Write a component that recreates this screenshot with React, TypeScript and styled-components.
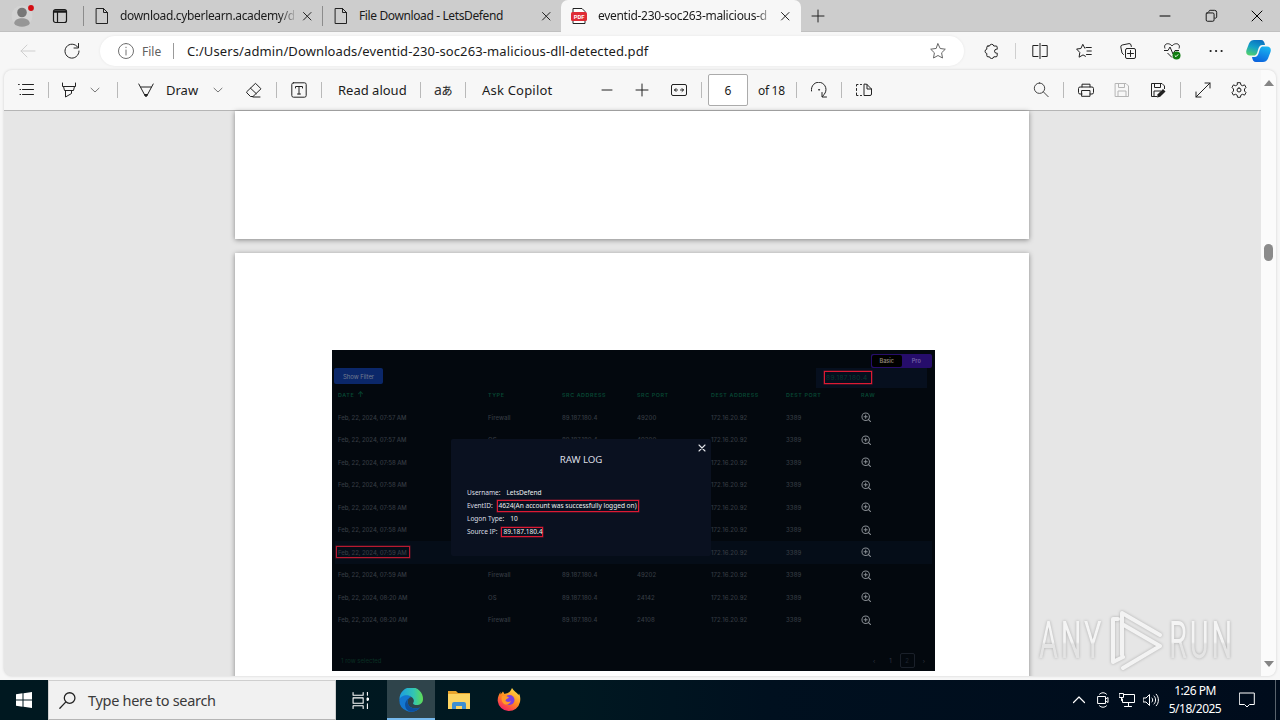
import React, { memo } from "react";
import styled, { createGlobalStyle, css } from "styled-components";

const GlobalStyle = createGlobalStyle`
  * {
    box-sizing: border-box;
  }

  body {
    margin: 0;
    overflow: hidden;
    font-family: "Noto Sans", "Open Sans", "Noto Sans CJK JP", sans-serif;
    color: #1b1b1b;
  }

  svg {
    display: block;
    flex: none;
  }
`;

const Screen = styled.div`
  position: relative;
  width: 1280px;
  height: 720px;
  display: flex;
  flex-direction: column;
  overflow: hidden;
  background-color: #f7f7f7;
`;

/* Shared bits */

const Cell = styled.div<{ $w: number }>`
  width: ${({ $w }) => $w}px;
  flex: none;
  display: flex;
  align-items: center;
  justify-content: center;
`;

const Gap = styled.div<{ $w?: number }>`
  ${({ $w }) =>
    $w === undefined
      ? css`
          flex: 1;
        `
      : css`
          flex: none;
          width: ${$w}px;
        `}
`;

const Divider = styled.div<{ $h?: number; $tone?: string }>`
  width: 1px;
  flex: none;
  height: ${({ $h }) => $h ?? 16}px;
  background-color: ${({ $tone }) => $tone ?? "#b9b9b9"};
`;

const Label = styled.div<{
  $w: number;
  $track?: number;
  $size?: number;
  $tone?: string;
}>`
  width: ${({ $w }) => $w}px;
  flex: none;
  font-size: ${({ $size }) => $size ?? 13}px;
  letter-spacing: ${({ $track }) => $track ?? 0}px;
  color: ${({ $tone }) => $tone ?? "#1b1b1b"};
  white-space: nowrap;
`;

/* Tab strip */

const TabStrip = styled.div`
  height: 32px;
  display: flex;
  align-items: center;
  background-color: #cdcdcd;
  border-bottom: 1px solid #c0c0c0;
`;

const Tab = styled.div<{ $active?: boolean; $w: number; $pad: number }>`
  width: ${({ $w }) => $w}px;
  height: 32px;
  flex: none;
  display: flex;
  align-items: center;
  padding-left: ${({ $pad }) => $pad}px;
  ${({ $active }) =>
    $active &&
    css`
      background-color: #f7f7f7;
      border-radius: 7px 7px 0 0;
      margin-bottom: -1px;
    `}
`;

const TabTitle = styled.div<{ $w: number; $track: number; $fade?: boolean }>`
  width: ${({ $w }) => $w}px;
  flex: none;
  white-space: nowrap;
  font-size: 12px;
  line-height: 18px;
  letter-spacing: ${({ $track }) => $track}px;
  ${({ $fade }) =>
    $fade &&
    css`
      mask-image: linear-gradient(to right, #000 calc(100% - 14px), rgba(0, 0, 0, 0.2));
    `}
`;

/* Address row */

const NavRow = styled.div`
  height: 38px;
  display: flex;
  align-items: center;
`;

const AddressBar = styled.div`
  width: 864px;
  height: 30px;
  flex: none;
  display: flex;
  align-items: center;
  background-color: #fff;
  border-radius: 15px;
  box-shadow: 0 0 3px rgba(0, 0, 0, 0.07);
`;

/* Viewer */

const Viewer = styled.div`
  width: 1272px;
  height: 606px;
  margin-left: 4px;
  flex: none;
  display: flex;
  overflow: hidden;
  border-radius: 8px;
  background-color: #e6e6e6;
  box-shadow: 0 0 3px rgba(0, 0, 0, 0.16);
`;

const ViewerMain = styled.div`
  width: 1257px;
  display: flex;
  flex-direction: column;
`;

const PdfToolbar = styled.div`
  height: 41px;
  flex: none;
  display: flex;
  align-items: center;
  background-color: #f7f7f7;
  border-bottom: 1px solid #b5b5b5;
`;

const PageInput = styled.div`
  width: 40px;
  height: 32px;
  flex: none;
  display: flex;
  align-items: center;
  justify-content: center;
  background-color: #fff;
  border: 1px solid #ababab;
  border-radius: 2px;
  font-size: 12px;
`;

const PageArea = styled.div`
  flex: 1;
  min-height: 0;
  display: flex;
  flex-direction: column;
  align-items: center;
  gap: 14px;
  padding-right: 1px;
`;

const PdfPage = styled.div<{ $h: number }>`
  width: 794px;
  height: ${({ $h }) => $h}px;
  flex: none;
  padding-left: 97px;
  background-color: #fff;
  box-shadow: 0 1px 5px rgba(0, 0, 0, 0.42);
`;

const ScrollTrack = styled.div`
  width: 15px;
  display: flex;
  flex-direction: column;
  align-items: center;
  justify-content: space-between;
  padding: 10px 0 9px;
  background-color: #fbfbfb;
`;

const ScrollThumb = styled.div`
  width: 9px;
  height: 17px;
  margin-bottom: 243px;
  border-radius: 5px;
  background-color: #8b8b8b;
`;

/* Figure inside the page */

const Figure = styled.div`
  position: relative;
  width: 603px;
  height: 321px;
  margin-top: 97px;
  display: flex;
  flex-direction: column;
  background-color: #03080e;
  font-family: "Inter", "Roboto", sans-serif;
  font-size: 6px;
`;

const FigureTop = styled.div`
  height: 18px;
  display: flex;
  justify-content: flex-end;
  align-items: center;
  padding: 3px 3px 0 0;
`;

const ModeSwitch = styled.div`
  width: 61px;
  height: 14px;
  display: flex;
  padding: 1px;
  border-radius: 2px;
  background-color: #260d6b;
`;

const ModeOption = styled.div<{ $on?: boolean }>`
  flex: 1;
  display: flex;
  align-items: center;
  justify-content: center;
  border-radius: 2px;
  background-color: ${({ $on }) => ($on ? "#000" : "transparent")};
  color: ${({ $on }) => ($on ? "#8f8577" : "#7361a5")};
  font-size: 5.5px;
  font-weight: 600;
`;

const FilterRow = styled.div`
  height: 20px;
  display: flex;
  justify-content: space-between;
  padding: 0 8px 0 2px;
`;

const FilterButton = styled.div`
  width: 49px;
  height: 16px;
  display: flex;
  align-items: center;
  justify-content: center;
  border-radius: 2px;
  background-color: #0b2769;
  color: #747b90;
  letter-spacing: -0.05px;
`;

const SearchBox = styled.div`
  width: 111px;
  height: 20px;
  padding: 3px 8px;
  background-color: #060f1e;
`;

const Marked = styled.div<{ $w: number; $h: number }>`
  width: ${({ $w }) => $w}px;
  height: ${({ $h }) => $h}px;
  flex: none;
  display: flex;
  align-items: center;
  padding-left: 1px;
  border: 1px solid #dc1a33;
  box-shadow: 0 0 0 0.5px rgba(220, 26, 51, 0.5);
  white-space: nowrap;
`;

const SearchValue = styled.span`
  color: #0a3a32;
  font-size: 6.5px;
  letter-spacing: 0.4px;
`;

const LogRow = styled.div<{ $head?: boolean; $selected?: boolean }>`
  height: ${({ $head }) => ($head ? 13 : 22.5)}px;
  margin: 0 3px;
  margin-bottom: ${({ $head }) => ($head ? 5.2 : 0)}px;
  padding-left: 3px;
  display: grid;
  grid-template-columns: 150px 74px 75px 74px 75px 75px 1fr;
  align-items: center;
  white-space: nowrap;
  letter-spacing: ${({ $head }) => ($head ? 0.57 : 0.07)}px;
  font-weight: ${({ $head }) => ($head ? 600 : 500)};
  font-size: ${({ $head }) => ($head ? 5.4 : 6)}px;
  color: ${({ $head }) => ($head ? "#074733" : "#353b42")};
  background-color: ${({ $selected }) => ($selected ? "#050d18" : "transparent")};
`;

const LogDate = styled.span`
  letter-spacing: -0.08px;
`;

const SortArrow = styled.span`
  margin-left: 1px;
  font-size: 7px;
`;

const DateMark = styled.div`
  width: 74px;
  height: 12px;
  margin-left: -2px;
  display: flex;
  align-items: center;
  padding-left: 1px;
  border: 1px solid #b81a30;
  box-shadow: 0 0 0 0.5px rgba(184, 26, 48, 0.5);
`;

const LogFooter = styled.div`
  margin-top: 21.3px;
  height: 16px;
  display: flex;
  align-items: center;
  justify-content: space-between;
  padding: 0 10px 0 9px;
  color: #0a3024;
`;

const Pager = styled.div`
  display: flex;
  align-items: center;
  gap: 8px;
  color: #303642;
`;

const PagerPrevious = styled.span`
  margin-right: 6px;
`;

const PagerCurrent = styled.div`
  width: 15px;
  height: 15px;
  display: flex;
  align-items: center;
  justify-content: center;
  border: 1px solid #1a202a;
  border-radius: 2px;
  color: #1f2531;
`;

const Modal = styled.div`
  position: absolute;
  left: 119px;
  top: 89px;
  width: 260px;
  height: 117px;
  padding: 0 16px;
  border-radius: 2px;
  background-color: #0a1120;
  font-family: "Noto Sans", "Open Sans", sans-serif;
  color: #dcdfe4;
`;

const ModalClose = styled.div`
  position: absolute;
  right: 5px;
  top: 5px;
`;

const ModalTitle = styled.div`
  height: 41px;
  margin-bottom: 6px;
  display: flex;
  align-items: center;
  justify-content: center;
  font-size: 9.7px;
  letter-spacing: -0.05px;
`;

const Field = styled.div<{ $gap: number }>`
  height: 13px;
  display: flex;
  align-items: center;
  gap: ${({ $gap }) => $gap}px;
  font-size: 6.6px;
  letter-spacing: -0.05px;
  white-space: nowrap;
  color: #dcdfe4;
`;

const FieldValue = styled.span`
  color: #eceef1;
  letter-spacing: -0.02px;
`;

/* Watermark */

const Watermark = styled.div`
  position: absolute;
  left: 1039px;
  top: 608px;
  width: 200px;
  height: 66px;
  display: flex;
  align-items: center;
  filter: drop-shadow(0 0 1.5px rgba(0, 0, 0, 0.25));
`;

const WatermarkWord = styled.div<{ $w: number }>`
  width: ${({ $w }) => $w}px;
  flex: none;
  white-space: nowrap;

  span {
    display: inline-block;
    transform: scaleX(0.57);
    transform-origin: left center;
    font-family: "Roboto", sans-serif;
    font-size: 51px;
    line-height: 50px;
    letter-spacing: 5px;
    color: transparent;
    background: linear-gradient(#f4f4f4 52%, #e4e4e4 56%);
    background-clip: text;
  }
`;

/* Taskbar */

const Taskbar = styled.div`
  height: 40px;
  margin-top: 4px;
  flex: none;
  display: flex;
  align-items: center;
  background: linear-gradient(to right, #001820 0, #001821 45%, #00101f 60%, #000c1c 100%);
  color: #fff;
`;

const TaskSearch = styled.div`
  width: 288px;
  height: 40px;
  flex: none;
  display: flex;
  align-items: center;
  padding-left: 10px;
  gap: 12px;
  background-color: #f1f1f1;
  border: 1px solid #cfcfcf;
  border-bottom-color: #b5b5b5;
  font-size: 14.5px;
  letter-spacing: -0.3px;
  color: #3a3a3a;
`;

const TaskApp = styled.div<{ $active?: boolean }>`
  width: 48px;
  height: 40px;
  flex: none;
  display: flex;
  align-items: center;
  justify-content: center;
  ${({ $active }) =>
    $active &&
    css`
      background-color: #2f444b;
      border-bottom: 2px solid #76b9ed;
      padding-top: 2px;
    `}
`;

const Clock = styled.div`
  width: 60px;
  flex: none;
  text-align: center;
  font-size: 12px;
  line-height: 18px;
  letter-spacing: -0.5px;
  white-space: nowrap;
`;

const DesktopEdge = styled.div`
  width: 5px;
  height: 40px;
  border-left: 1px solid #59636d;
`;

interface GlyphProps {
  d: string;
  size?: number;
  color?: string;
  stroke?: number;
}

// All glyphs share a 16 unit grid
const Glyph: React.FC<GlyphProps> = memo(
  ({ d, size = 16, color = "#222", stroke = 1 }) => (
    <svg
      width={size}
      height={size}
      viewBox="0 0 16 16"
      fill="none"
      stroke={color}
      strokeWidth={stroke}
      strokeLinecap="round"
      strokeLinejoin="round"
    >
      <path d={d} />
    </svg>
  )
);

const glyphs = {
  close: "M4.5 4.5l7.5 7.5M12 4.5L4.5 12",
  file: "M2.5 .5h7l4 4v11h-11zM9.5 .5v4h4",
  plus: "M8 2v12M2 8h12",
  minus: "M3 8h10",
  back: "M15 8H1M7 2L1 8l6 6",
  refresh: "M13.8 4.2A7 7 0 1 0 15 8M14.5 .5v4.5H10",
  info: "M8 .5a7.5 7.5 0 1 0 0 15 7.5 7.5 0 0 0 0-15zM8 7v5M8 4.2v.5",
  star: "M8 .8l2.2 4.7 5.1.7-3.7 3.6.9 5.2L8 12.5 3.5 15l.9-5.2L.7 6.2l5.1-.7z",
  // piece with two outward knobs (top, left) and a notch on the right
  puzzle:
    "M5 3h1.500a2.200 2.200 0 0 1 4.300 0H13a1.200 1.200 0 0 1 1.200 1.200V6.300h-.8a1.900 1.900 0 0 0 0 3.800h.8v2.500A1.200 1.200 0 0 1 13 13.800h-2.200a2.200 2.200 0 0 1-4.300 0H5A1.200 1.200 0 0 1 3.800 12.600V10.500a2.200 2.200 0 0 1 0-4.300V4.200A1.200 1.200 0 0 1 5 3z",
  split: "M6 2.5H.8v11H6M10 2.5h5.2v11H10M8 0v16",
  favorites:
    "M15.3 4.5H10M15.3 8H11M15.3 11.5H10.5M8.8 5.2L6.8 1.3 4.9 5.5.6 6l3.2 3.5-.7 4.7 3.9-2.3 2.5 1.4",
  collections:
    "M7 5.5h7A1.5 1.5 0 0 1 15.5 7v7a1.5 1.5 0 0 1-1.5 1.5H7A1.5 1.5 0 0 1 5.5 14V7A1.5 1.5 0 0 1 7 5.5zM10.5 7.5v6M7.5 10.5h6M3.5 11.5L2 10 .8 4a1.8 1.8 0 0 1 1.4-2L9 .6a1.8 1.8 0 0 1 2 1.4l.3 1.5",
  list: "M4.5 2.5h11M4.500 7.500h11M4.5 12.5h11M.5 2.5h.8M2 7.5h.6M2 12.5h.6",
  chevron: "M4 6.2l4 3.8 4-3.8",
  marker: "M1.5 1v3.5h13V1M2.5 4.5l1 4h9l1-4M4.5 8.5v6.5l6-3.5v-3",
  pen: "M.8 2l6.7 12.5h1L15.2 2M2.7 5h10.6M6.5 12.5h3M7 13.5h2",
  eraser: "M1 9.5L9.5 1.3 15 6.8 7 14.5H4.5L1 11zM4.5 6.2l5.8 5.5M7 15h7",
  textBox:
    "M2.5.8h11a1.7 1.7 0 0 1 1.7 1.7v11a1.7 1.7 0 0 1-1.7 1.7h-11A1.7 1.7 0 0 1 .8 13.5v-11A1.7 1.7 0 0 1 2.5.8zM4.5 6V4.5h7V6M8 4.5v7.5M6.5 12h3",
  fit: "M2 2.5h12a1.5 1.5 0 0 1 1.5 1.5v8a1.5 1.5 0 0 1-1.5 1.5H2A1.5 1.5 0 0 1 .5 12V4A1.5 1.5 0 0 1 2 2.5zM3.5 8h3M9.5 8h3M5 6.5L3.5 8 5 9.5M11 6.5L12.5 8 11 9.5",
  rotate: "M.5 9A7.300 7.300 0 1 1 13 12.500L11.500 14.500M11 10.500V15h4.500M8 7.5h.6v.6H8z",
  pageView:
    "M8 2.5v11h6a1.5 1.5 0 0 0 1.5-1.5V7L11 2.5zM11 2.5V7h4.5M5.5 2.5h-1M2 2.5H.5V4M.5 6.5v2M.5 11v2.5H2M4.5 13.5h1",
  search: "M6.5 1a5.2 5.2 0 1 0 0 10.4A5.2 5.2 0 0 0 6.5 1zM10.5 10l4.700 4.7",
  print:
    "M4 5V2.2h8V5M4 12H2a1.5 1.5 0 0 1-1.5-1.5V6.5A1.5 1.5 0 0 1 2 5h12a1.5 1.5 0 0 1 1.5 1.5v4A1.5 1.5 0 0 1 14 12h-2M4 8.5h8v5.8H4z",
  save: "M1.5 1.5h10.5l2.5 2.5v10.5h-13zM4.5 1.5v4h6v-4M4 14.5V9h8v5.5",
  expand: "M10 1h5v5M6 15H1v-5M15 1L1 15",
  restore:
    "M5.5 3.5A1.5 1.5 0 0 1 7 1.5h5a2.5 2.5 0 0 1 2.5 2.5v5a1.5 1.5 0 0 1-2 1.5M3.5 4.5h6.5A1.5 1.5 0 0 1 11.5 6v6.5a1.5 1.5 0 0 1-1.5 1.5H4A1.5 1.5 0 0 1 2.5 12.5V5.5A1 1 0 0 1 3.5 4.5z",
  zoomIn: "M7.5 1.5a6 6 0 1 0 0 12 6 6 0 0 0 0-12zM11.8 11.8l3.5 3.5M7.5 5v5M5 7.5h5",
  gear: "M6.6.7h2.8l.5 2.2 1.5.8 2.2-.8 1.4 2.5L13.5 7v2l1.5 1.6-1.4 2.5-2.2-.8-1.5.8-.5 2.200H6.6l-.5-2.2-1.5-.8-2.2.8L1 10.6 2.5 9V7L1 5.4l1.4-2.5 2.2.8 1.5-.8zM8 6a2 2 0 1 0 0 4 2 2 0 0 0 0-4z",
};

const PdfIcon = () => (
  <svg width="16" height="16" viewBox="0 0 16 16">
    <path d="M2 .5h9L14 3.5v12H2z" fill="#fff" stroke="#222" />
    <rect x="0" y="4" width="16" height="9" rx="1.5" fill="#df2c35" />
    <text x="8" y="10.7" fontSize="5.8" fontWeight="700" fill="#fff" textAnchor="middle" fontFamily="Roboto, sans-serif">
      PDF
    </text>
  </svg>
);

const Avatar = () => (
  <svg width="23" height="22" viewBox="0 0 23 22">
    <circle cx="11" cy="11" r="10.5" fill="#d3d3d3" />
    <circle cx="11" cy="7.5" r="4.8" fill="#777" />
    <path d="M3.2 18.5c0-7 15.6-7 15.6 0-2 4.2-13.6 4.2-15.6 0z" fill="#969696" />
    <circle cx="20" cy="3" r="2.9" fill="#d40c12" />
  </svg>
);

const PanelIcon = () => (
  <svg width="16" height="16" viewBox="0 0 16 16" fill="none" stroke="#1a1a1a">
    <rect x="1.5" y="1.5" width="13" height="13" rx="2" strokeWidth="1.2" />
    <path d="M2 3.5h12" strokeWidth="2.5" />
    <path d="M5.5 4v10" strokeWidth="1.2" />
  </svg>
);

const HealthIcon = () => (
  <svg width="18" height="18" viewBox="0 0 18 18" fill="none" stroke="#222" strokeLinejoin="round">
    <path d="M2 6.5C0 1.5 6 0 9 4c3-4 9-2.5 7 2.5M1 8.5h4L7 5l3 7 2-3.5h4M4.5 11L9 15.5" />
    <circle cx="13.5" cy="13.5" r="4" fill="#107c10" stroke="none" />
    <path d="M11.8 13.5l1.2 1.2 2.2-2.3" stroke="#fff" />
  </svg>
);

const CopilotIcon = () => (
  <svg width="25" height="24" viewBox="0 0 25 24">
    <defs>
      <linearGradient id="copilotLeft" x1="0.7" y1="0" x2="0.3" y2="1">
        <stop offset="0" stopColor="#0a6fc0" />
        <stop offset="0.5" stopColor="#13a0c8" />
        <stop offset="1" stopColor="#4fcf70" />
      </linearGradient>
      <linearGradient id="copilotRight" x1="0.7" y1="0" x2="0.3" y2="1">
        <stop offset="0" stopColor="#18b4f0" />
        <stop offset="1" stopColor="#0b62dd" />
      </linearGradient>
    </defs>
    <path d="M8 1h7c2.500 0 3.500 2 4 5h-2.500c-2.500 0-3.500 1.500-4.500 5-.8 3-1.500 5.500-4 5.500H4c-3 0-4.500-2-3.500-5.500L3 4.500C4 2 6 1 8 1z" fill="url(#copilotLeft)" />
    <path d="M17 23h-7C7.500 23 6.500 21 6 18h2.500c2.500 0 3.500-1.500 4.500-5 .8-3 1.500-5.500 4-5.500H21c3 0 4.500 2 3.500 5.500L22 19.500c-1 2.500-3 3.500-5 3.500z" fill="url(#copilotRight)" />
  </svg>
);

const SaveAsIcon = () => (
  <svg width="16" height="16" viewBox="0 0 16 16" fill="none" stroke="#222">
    <path d="M7 14.5H1.5v-13H12L14.5 4v3M4.5 1.5v4h6v-4M4 14V9h7" />
    <path d="M7 15.5l.7-3.3L13 7l2.5 2.5-5.3 5.3z" fill="#222" stroke="none" />
  </svg>
);

const TranslateIcon = styled.div`
  margin-top: -2px;
  font-size: 14px;
  letter-spacing: -0.5px;
  color: #333;

  small {
    font-size: 11px;
    font-weight: 500;
  }
`;

const ArrowMark: React.FC<{ down?: boolean }> = ({ down }) => (
  <svg width="10" height="6" viewBox="0 0 10 6">
    <path d={down ? "M0 0h10L5 6z" : "M0 6h10L5 0z"} fill="#858585" />
  </svg>
);

const TabBar = () => (
  <TabStrip>
    <Gap $w={11} />
    <Avatar />
    <Gap $w={18} />
    <PanelIcon />
    <Gap $w={15} />
    <Divider $h={20} $tone="#8c8c8c" />
    <Tab $w={238} $pad={10}>
      <Glyph d={glyphs.file} />
      <Gap $w={10} />
      <TabTitle $w={174} $track={-0.34} $fade>
        download.cyberlearn.academy/d
      </TabTitle>
      <Gap $w={5} />
      <Glyph d={glyphs.close} />
    </Tab>
    <Divider $h={20} $tone="#8c8c8c" />
    <Tab $w={238} $pad={10}>
      <Glyph d={glyphs.file} />
      <Gap $w={10} />
      <TabTitle $w={174} $track={-0.38}>
        File Download - LetsDefend
      </TabTitle>
      <Gap $w={5} />
      <Glyph d={glyphs.close} />
    </Tab>
    <Tab $w={240} $pad={10} $active>
      <PdfIcon />
      <Gap $w={11} />
      <TabTitle $w={172} $track={-0.3} $fade>
        eventid-230-soc263-malicious-d
      </TabTitle>
      <Gap $w={7} />
      <Glyph d={glyphs.close} />
    </Tab>
    <Gap $w={9} />
    <Glyph d={glyphs.plus} />
    <Gap />
    <Cell $w={46}>
      <Glyph d={glyphs.minus} color="#000" />
    </Cell>
    <Cell $w={46}>
      <Glyph d={glyphs.restore} size={14} color="#000" />
    </Cell>
    <Cell $w={46}>
      <Glyph d="M3 3l10 10M13 3L3 13" color="#000" />
    </Cell>
  </TabStrip>
);

const NavBar = () => (
  <NavRow>
    <Gap $w={6} />
    <Cell $w={44}>
      <Glyph d={glyphs.back} color="#cfcfcf" />
    </Cell>
    <Cell $w={44}>
      <Glyph d={glyphs.refresh} />
    </Cell>
    <Gap $w={6} />
    <AddressBar>
      <Gap $w={18} />
      <Glyph d={glyphs.info} color="#707070" />
      <Gap $w={8} />
      <Label $w={31} $size={12} $tone="#606060">
        File
      </Label>
      <Divider $tone="#9a9a9a" />
      <Gap $w={13} />
      <Label $w={700} $size={13} $track={0.11}>
        C:/Users/admin/Downloads/eventid-230-soc263-malicious-dll-detected.pdf
      </Label>
      <Gap />
      <Glyph d={glyphs.star} color="#666" />
      <Gap $w={18} />
    </AddressBar>
    <Gap $w={5} />
    <Cell $w={44}>
      <Glyph d={glyphs.puzzle} />
    </Cell>
    <Gap $w={2} />
    <Divider $tone="#cfcfcf" />
    <Gap $w={1} />
    <Cell $w={45}>
      <Glyph d={glyphs.split} />
    </Cell>
    <Cell $w={44}>
      <Glyph d={glyphs.favorites} />
    </Cell>
    <Cell $w={44}>
      <Glyph d={glyphs.collections} />
    </Cell>
    <Cell $w={44}>
      <HealthIcon />
    </Cell>
    <Cell $w={44}>
      <Glyph d="M2.5 8h.2M8 8h.2M13.5 8h.2" stroke={2} />
    </Cell>
    <Cell $w={40}>
      <CopilotIcon />
    </Cell>
  </NavRow>
);

const PdfTools = () => (
  <PdfToolbar>
    <Cell $w={44}>
      <Glyph d={glyphs.list} />
    </Cell>
    <Divider />
    <Cell $w={40}>
      <Glyph d={glyphs.marker} />
    </Cell>
    <Cell $w={12}>
      <Glyph d={glyphs.chevron} color="#777" />
    </Cell>
    <Gap $w={16} />
    <Divider />
    <Gap $w={16} />
    <Cell $w={24}>
      <Glyph d={glyphs.pen} />
    </Cell>
    <Gap $w={8} />
    <Label $w={44}>Draw</Label>
    <Cell $w={16}>
      <Glyph d={glyphs.chevron} color="#777" />
    </Cell>
    <Gap $w={16} />
    <Cell $w={24}>
      <Glyph d={glyphs.eraser} />
    </Cell>
    <Gap $w={10} />
    <Divider />
    <Cell $w={44}>
      <Glyph d={glyphs.textBox} />
    </Cell>
    <Divider />
    <Gap $w={16} />
    <Label $w={82}>Read aloud</Label>
    <Divider />
    <Cell $w={44}>
      <TranslateIcon>
        a<small>あ</small>
      </TranslateIcon>
    </Cell>
    <Divider />
    <Gap $w={16} />
    <Label $w={113} $track={0.2}>
      Ask Copilot
    </Label>
    <Cell $w={24}>
      <Glyph d={glyphs.minus} />
    </Cell>
    <Gap $w={11} />
    <Cell $w={24}>
      <Glyph d={glyphs.plus} />
    </Cell>
    <Gap $w={13} />
    <Cell $w={24}>
      <Glyph d={glyphs.fit} />
    </Cell>
    <Gap $w={10} />
    <Divider />
    <Gap $w={6} />
    <PageInput>6</PageInput>
    <Gap $w={10} />
    <Label $w={38} $size={12} $track={-0.3}>
      of 18
    </Label>
    <Divider />
    <Cell $w={44}>
      <Glyph d={glyphs.rotate} />
    </Cell>
    <Divider />
    <Cell $w={44}>
      <Glyph d={glyphs.pageView} />
    </Cell>
    <Gap />
    <Cell $w={24}>
      <Glyph d={glyphs.search} color="#444" />
    </Cell>
    <Gap $w={10} />
    <Divider />
    <Gap $w={10} />
    <Cell $w={24}>
      <Glyph d={glyphs.print} />
    </Cell>
    <Gap $w={12} />
    <Cell $w={24}>
      <Glyph d={glyphs.save} color="#b5b5b5" />
    </Cell>
    <Gap $w={12} />
    <Cell $w={24}>
      <SaveAsIcon />
    </Cell>
    <Gap $w={10} />
    <Divider />
    <Gap $w={10} />
    <Cell $w={24}>
      <Glyph d={glyphs.expand} />
    </Cell>
    <Gap $w={12} />
    <Cell $w={24}>
      <Glyph d={glyphs.gear} />
    </Cell>
    <Gap $w={10} />
  </PdfToolbar>
);

interface LogEntry {
  date: string;
  type?: string;
  src?: string;
  port?: string;
  selected?: boolean;
}

// Rows behind the dialog only carry the columns that stay visible
const logs: LogEntry[] = [
  { date: "Feb, 22, 2024, 07:57 AM", type: "Firewall", src: "89.187.180.4", port: "49200" },
  { date: "Feb, 22, 2024, 07:57 AM", type: "OS", src: "89.187.180.4", port: "49200" },
  { date: "Feb, 22, 2024, 07:58 AM" },
  { date: "Feb, 22, 2024, 07:58 AM" },
  { date: "Feb, 22, 2024, 07:58 AM" },
  { date: "Feb, 22, 2024, 07:58 AM" },
  { date: "Feb, 22, 2024, 07:59 AM", selected: true },
  { date: "Feb, 22, 2024, 07:59 AM", type: "Firewall", src: "89.187.180.4", port: "49202" },
  { date: "Feb, 22, 2024, 08:20 AM", type: "OS", src: "89.187.180.4", port: "24142" },
  { date: "Feb, 22, 2024, 08:20 AM", type: "Firewall", src: "89.187.180.4", port: "24108" },
];

const RawLogModal = () => (
  <Modal>
    <ModalClose>
      <Glyph d="M2 2l12 12M14 2L2 14" size={8} color="#e4e6ea" stroke={2.2} />
    </ModalClose>
    <ModalTitle>RAW LOG</ModalTitle>
    <Field $gap={6}>
      Username: <FieldValue>LetsDefend</FieldValue>
    </Field>
    <Field $gap={4}>
      EventID:
      <Marked $w={142} $h={12}>
        <FieldValue>4624(An account was successfully logged on)</FieldValue>
      </Marked>
    </Field>
    <Field $gap={6}>
      Logon Type: <FieldValue>10</FieldValue>
    </Field>
    <Field $gap={4}>
      Source IP:
      <Marked $w={42} $h={10}>
        <FieldValue>89.187.180.4</FieldValue>
      </Marked>
    </Field>
  </Modal>
);

const LogFigure = () => (
  <Figure>
    <FigureTop>
      <ModeSwitch>
        <ModeOption $on>Basic</ModeOption>
        <ModeOption>Pro</ModeOption>
      </ModeSwitch>
    </FigureTop>
    <FilterRow>
      <FilterButton>Show Filter</FilterButton>
      <SearchBox>
        <Marked $w={48} $h={13}>
          <SearchValue>89.187.180.4</SearchValue>
        </Marked>
      </SearchBox>
    </FilterRow>
    <LogRow $head>
      <span>
        DATE<SortArrow> ↑</SortArrow>
      </span>
      <span>TYPE</span>
      <span>SRC ADDRESS</span>
      <span>SRC PORT</span>
      <span>DEST ADDRESS</span>
      <span>DEST PORT</span>
      <span>RAW</span>
    </LogRow>
    {logs.map((log, index) => (
      <LogRow key={index} $selected={log.selected}>
        {log.selected ? (
          <DateMark>
            <LogDate>{log.date}</LogDate>
          </DateMark>
        ) : (
          <LogDate>{log.date}</LogDate>
        )}
        <span>{log.type}</span>
        <span>{log.src}</span>
        <span>{log.port}</span>
        <span>172.16.20.92</span>
        <span>3389</span>
        <Glyph d={glyphs.zoomIn} size={10} color="#868b91" stroke={1.7} />
      </LogRow>
    ))}
    <LogFooter>
      <span>1 row selected</span>
      <Pager>
        <PagerPrevious>‹</PagerPrevious>
        <span>1</span>
        <PagerCurrent>2</PagerCurrent>
        <span>›</span>
      </Pager>
    </LogFooter>
    <RawLogModal />
  </Figure>
);

const EdgeIcon = () => (
  <svg width="24" height="24" viewBox="0 0 24 24">
    <defs>
      <linearGradient id="edgeWave" x1="0" y1="0.4" x2="1" y2="0.4">
        <stop offset="0" stopColor="#1b9de2" />
        <stop offset="0.6" stopColor="#32c5b4" />
        <stop offset="1" stopColor="#5fdc55" />
      </linearGradient>
    </defs>
    <path d="M.5 11A11.6 11.6 0 0 1 24 11c0 4-3 6-6.5 6-2.5 0-4-1-3.2-2.2C16.5 11 12 7 7 8.5c-3 .8-5 2-6.5 2.5z" fill="url(#edgeWave)" />
    <path d="M.3 12C1 7.5 9 5.5 12.5 9 9 9.5 8 13 9 16c1.3 4 6 5.5 12 3.5A11.7 11.7 0 0 1 .3 12z" fill="#1377d0" />
    <path d="M12.500 9C9 9.5 7.5 13 9 16c1.5 4 6 5.5 12 3.5-3 3.5-7 4.8-10 4.2C4 21.5 4.5 11.5 12.5 9z" fill="#0c4f9e" />
  </svg>
);

const FolderIcon = () => (
  <svg width="22" height="20" viewBox="0 0 22 20">
    <path d="M0 1h8l2 2h12v5H0z" fill="#e9a52d" />
    <path d="M0 4h22v15H0z" fill="#fcd462" />
    <path d="M4 19v-5a2 2 0 0 1 2-2h10a2 2 0 0 1 2 2v5h-4v-3H8v3z" fill="#3d8ed0" />
  </svg>
);

const FirefoxIcon = () => (
  <svg width="24" height="24" viewBox="0 0 24 24">
    <defs>
      <linearGradient id="foxBody" x1="0.8" y1="0" x2="0.2" y2="1">
        <stop offset="0" stopColor="#ffe14a" />
        <stop offset="0.5" stopColor="#ff8a1e" />
        <stop offset="1" stopColor="#f5156c" />
      </linearGradient>
    </defs>
    <path d="M15 0c1.5 3 5 4.5 6.5 7l.5-1.5c1.5 3 1.5 6 1 8.5A11.3 11.3 0 0 1 .7 13C.5 9 2 6.5 3.5 4v2.5L6 3.5 7.5 6C10 5.5 13 5 15 0z" fill="url(#foxBody)" />
    <circle cx="12.5" cy="12" r="5" fill="#7a3fe0" />
    <path d="M5 8c3-.8 5 .2 7 1.5-1 1.5-3 1-3.5 3 1 2 4 1.5 5.5.5-1 3-4 4.5-7 3C4.5 14 4 10.5 5 8z" fill="#ff9a28" />
  </svg>
);

const StartIcon = () => (
  <svg width="16" height="16" viewBox="0 0 16 16" fill="#fff">
    <path d="M0 2.2L6.5 1.3v6.2H0zM7.5 1.2L16 0v7.5H7.5zM0 8.5h6.5v6.2L0 13.8zM7.5 8.5H16V16l-8.5-1.2z" />
  </svg>
);

const DesktopTaskbar = () => (
  <Taskbar>
    <Cell $w={48}>
      <StartIcon />
    </Cell>
    <TaskSearch>
      <Glyph d="M10 .7a5 5 0 1 0 0 10 5 5 0 0 0 0-10zM6.5 9.3L.8 15.3" size={17} color="#222" stroke={1.2} />
      Type here to search
    </TaskSearch>
    <TaskApp>
      <Glyph
        d="M1 .5v2.5h9.5V.5M1 5.5h9.5v5H1zM1 15.5V13h9.5v2.5M14.5 0v3M14.5 5.5v2.5M14.5 11v5M14.2 6h1.3v1.5h-1.3z"
        color="#fff"
        size={17}
      />
    </TaskApp>
    <Gap $w={3} />
    <TaskApp $active>
      <EdgeIcon />
    </TaskApp>
    <TaskApp>
      <FolderIcon />
    </TaskApp>
    <Gap $w={2} />
    <TaskApp>
      <FirefoxIcon />
    </TaskApp>
    <Gap />
    <Cell $w={24}>
      <Glyph d="M2.5 10.5L8 5l5.5 5.5" color="#fff" stroke={1.2} />
    </Cell>
    <Cell $w={24}>
      <Glyph d="M3 4.5h7.5v7H3zM10.5 7l2.5-1.5v5L10.5 9M4.5 2.2C6.5.2 9.5.2 11.5 2.2M4.5 13.8c2 2 5 2 7 0" color="#fff" />
    </Cell>
    <Cell $w={24}>
      <Glyph d="M5 2.5h10.5v8H3.5V7M.5 1.5h4v4h-4zM2.5 5.5v3M9.5 10.5v3.5M5.5 14.5h7" color="#fff" />
    </Cell>
    <Cell $w={24}>
      <Glyph d="M.5 6h2.5l3.5-3.5v11L3 10H.5zM9 6c1 1 1 3 0 4M11 4c2.2 2 2.2 6 0 8M13.2 2.2c3 3 3 8.6 0 11.6" color="#fff" />
    </Cell>
    <Gap $w={2} />
    <Clock>
      1:26 PM
      <br />
      5/18/2025
    </Clock>
    <Gap $w={10} />
    <Cell $w={24}>
      <Glyph d="M.7 1h14.6v11.5H10.5L8 15l-2.5-2.5H.7z" color="#fff" />
    </Cell>
    <Gap $w={16} />
    <DesktopEdge />
  </Taskbar>
);

const RunWatermark = () => (
  <Watermark>
    <WatermarkWord $w={68}>
      <span>ANY</span>
    </WatermarkWord>
    <svg width="62" height="66" viewBox="0 0 62 66" fill="none" stroke="#f3f3f3" strokeWidth="4" strokeLinejoin="round" strokeLinecap="round">
      <path d="M15 47V5l38 22M15 16l38 22L16 60M11 11L6 11v43l10-5" />
    </svg>
    <WatermarkWord $w={64}>
      <span>RUN</span>
    </WatermarkWord>
  </Watermark>
);

const App: React.FC = () => (
  <>
    <GlobalStyle />
    <Screen>
      <TabBar />
      <NavBar />
      <Viewer>
        <ViewerMain>
          <PdfTools />
          <PageArea>
            <PdfPage $h={128} />
            <PdfPage $h={430}>
              <LogFigure />
            </PdfPage>
          </PageArea>
        </ViewerMain>
        <ScrollTrack>
          <ArrowMark />
          <ScrollThumb />
          <ArrowMark down />
        </ScrollTrack>
      </Viewer>
      <DesktopTaskbar />
      <RunWatermark />
    </Screen>
  </>
);

export default memo(App);
